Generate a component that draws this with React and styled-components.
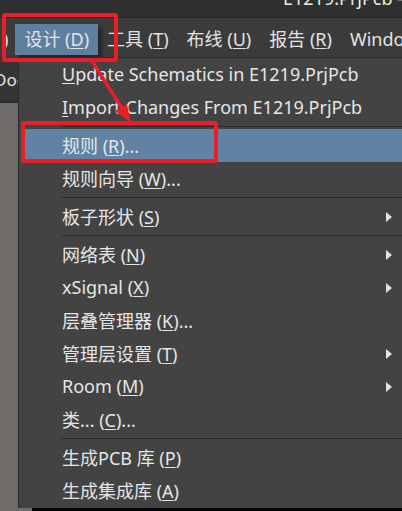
import React from 'react';
import styled, { createGlobalStyle } from 'styled-components';

const GlobalStyle = createGlobalStyle`
  html, body {
    margin: 0;
    padding: 0;
    background: #000;
    overflow: hidden;
  }
  body {
    font-family: "Noto Sans", "Noto Sans CJK SC", sans-serif;
  }
`;

const menuBarItems = [
  { label: ')', key: null },
  { label: '设计 ', key: 'D', active: true },
  { label: '工具 ', key: 'T' },
  { label: '布线 ', key: 'U' },
  { label: '报告 ', key: 'R' },
  { label: 'Windo', key: null },
];

// sep: separator line before the row
const menuRows = [
  { pre: '', key: 'U', post: 'pdate Schematics in E1219.PrjPcb' },
  { pre: '', key: 'I', post: 'mport Changes From E1219.PrjPcb' },
  { sep: true },
  { pre: '规则 (', key: 'R', post: ')...', active: true },
  { pre: '规则向导 (', key: 'W', post: ')...' },
  { sep: true },
  { pre: '板子形状 (', key: 'S', post: ')', sub: true },
  { sep: true },
  { pre: '网络表 (', key: 'N', post: ')', sub: true },
  { pre: 'xSignal (', key: 'X', post: ')', sub: true },
  { pre: '层叠管理器 (', key: 'K', post: ')...' },
  { pre: '管理层设置 (', key: 'T', post: ')', sub: true },
  { pre: 'Room (', key: 'M', post: ')', sub: true },
  { pre: '类... (', key: 'C', post: ')...' },
  { sep: true },
  { pre: '生成PCB 库 (', key: 'P', post: ')' },
  { pre: '生成集成库 (', key: 'A', post: ')' },
];

export default function App() {
  return (
    <>
      <GlobalStyle />
      <Screen>
        <TitleBar>
          <Title>E1219.PrjPcb - Altium Designer</Title>
        </TitleBar>

        <MenuBar>
          {menuBarItems.map((item, i) => (
            <BarItem key={i} $active={item.active} $first={i === 0}>
              {item.label}
              {item.key && (
                <>
                  (<Key>{item.key}</Key>)
                </>
              )}
            </BarItem>
          ))}
        </MenuBar>

        <Body>
          <LeftStrip>
            <DocTab>Doc</DocTab>
            <GrayPane />
          </LeftStrip>

          <DropMenu>
            {menuRows.map((row, i) =>
              row.sep ? (
                <Separator key={i} />
              ) : (
                <Row key={i} $active={row.active}>
                  <RowText>
                    {row.pre}
                    <Key>{row.key}</Key>
                    {row.post}
                  </RowText>
                  {row.sub && <SubArrow />}
                </Row>
              )
            )}
          </DropMenu>
        </Body>

        <Footer>
          <FooterGray />
        </Footer>

        {/* annotation overlays */}
        <RedBox style={{ left: 2, top: 13, width: 116, height: 49 }} />
        <RedBox style={{ left: 21, top: 121, width: 197, height: 42 }} />
        <ArrowSvg width="402" height="511" viewBox="0 0 402 511">
          <line x1="92" y1="61" x2="123" y2="110" stroke="#e81f28" strokeWidth="3.5" />
          <polygon points="131,123 115,111 127,104" fill="#e81f28" />
        </ArrowSvg>
      </Screen>
    </>
  );
}

const Screen = styled.div`
  position: relative;
  width: 402px;
  height: 511px;
  overflow: hidden;
  background: #000;
  display: flex;
  flex-direction: column;
`;

const TitleBar = styled.div`
  height: 17px;
  background: #2f2f2f;
  border-bottom: 1px solid #262626;
  overflow: hidden;
  display: flex;
  flex-shrink: 0;
`;

const Title = styled.span`
  display: block;
  margin: -11px 0 0 283px;
  font-size: 18px;
  line-height: 18px;
  color: #ececec;
  white-space: nowrap;
`;

const MenuBar = styled.div`
  height: 39px;
  background: #3b3b3b;
  display: flex;
  align-items: flex-start;
  padding-top: 6px;
  box-sizing: border-box;
  flex-shrink: 0;
`;

const BarItem = styled.div`
  height: 31px;
  line-height: 31px;
  padding: ${p => (p.$first ? '0 7px 0 3px' : '0 9px')};
  font-size: 18px;
  color: #e4e4e4;
  white-space: nowrap;
  background: ${p => (p.$active ? '#5f7f9f' : 'transparent')};
  box-shadow: ${p => (p.$active ? '4px 4px 3px rgba(0,0,0,0.35)' : 'none')};
`;

const Key = styled.span`
  text-decoration: underline;
  text-underline-offset: 2px;
  text-decoration-thickness: 1px;
`;

const Body = styled.div`
  display: flex;
  height: 451px;
  flex-shrink: 0;
`;

const LeftStrip = styled.div`
  width: 18px;
  display: flex;
  flex-direction: column;
  border-right: 1px solid #2a2a2a;
`;

const DocTab = styled.div`
  height: 43px;
  background: #353535;
  border-bottom: 3px solid #2c2c2c;
  color: #e4e4e4;
  font-size: 17px;
  line-height: 46px;
  text-indent: -6px;
  overflow: hidden;
  white-space: nowrap;
`;

const GrayPane = styled.div`
  flex: 1;
  background: #6e6b69;
`;

const DropMenu = styled.div`
  flex: 1;
  background: #434343;
  border-top: 1px solid #2e2e2e;
  display: flex;
  flex-direction: column;
`;

const Row = styled.div`
  height: 33px;
  box-sizing: border-box;
  display: flex;
  align-items: center;
  justify-content: space-between;
  padding: 0 10px 2px 41px;
  margin-left: 2px;
  background: ${p => (p.$active ? '#6083a3' : 'transparent')};
`;

const RowText = styled.span`
  font-size: 18px;
  color: #e6e6e6;
  white-space: nowrap;
`;

const SubArrow = styled.span`
  width: 0;
  height: 0;
  margin-top: 2px;
  border-top: 5px solid transparent;
  border-bottom: 5px solid transparent;
  border-left: 6px solid #e2e2e2;
`;

const Separator = styled.div`
  height: 1px;
  margin: 2px 0 2px 43px;
  background: #2b2b2b;
`;

const Footer = styled.div`
  flex: 1;
  display: flex;
`;

const FooterGray = styled.div`
  width: 32px;
  background: #6e6b69;
`;

const RedBox = styled.div`
  position: absolute;
  box-sizing: border-box;
  border: 4px solid #e81f28;
  border-radius: 3px;
  pointer-events: none;
`;

const ArrowSvg = styled.svg`
  position: absolute;
  left: 0;
  top: 0;
  pointer-events: none;
`;
